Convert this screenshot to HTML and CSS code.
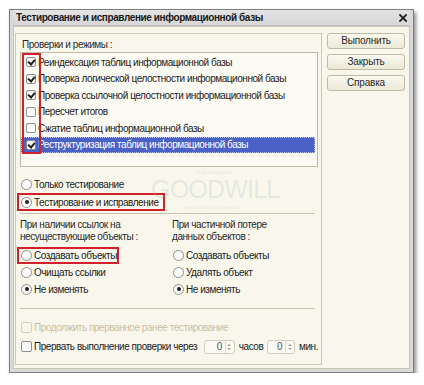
FILE: index.html
```html
<!DOCTYPE html>
<html lang="ru">
<head>
<meta charset="utf-8">
<title>Тестирование и исправление информационной базы</title>
<link rel="stylesheet" href="styles.css">
</head>
<body>
<div class="window">
  <div class="titlebar">
    <span class="title">Тестирование и исправление информационной базы</span>
    <svg class="close" width="8" height="8" viewBox="0 0 8 8"><path d="M1 1L7 7M7 1L1 7" stroke="#222" stroke-width="1.8" stroke-linecap="square"/></svg>
  </div>
  <div class="content">
    <div class="group">
      <div class="caption">Проверки и режимы :</div>
      <div class="list">
        <div class="row"><span class="cb on"></span><span>Реиндексация таблиц информационной базы</span></div>
        <div class="row"><span class="cb on"></span><span>Проверка логической целостности информационной базы</span></div>
        <div class="row"><span class="cb on"></span><span>Проверка ссылочной целостности информационной базы</span></div>
        <div class="row"><span class="cb"></span><span>Пересчет итогов</span></div>
        <div class="row"><span class="cb"></span><span>Сжатие таблиц информационной базы</span></div>
        <div class="row sel"><span class="cb on"></span><span class="seltext">Реструктуризация таблиц информационной базы</span></div>
        <div class="mark-cbs"></div>
      </div>

      <div class="modes">
        <div class="opt"><span class="rb"></span><span>Только тестирование</span></div>
        <div class="opt marked wide"><span class="rb on"></span><span>Тестирование и исправление</span></div>
      </div>
      <div class="sep"></div>

      <div class="cols">
        <div class="col">
          <div class="label">При наличии ссылок на<br>несуществующие объекты :</div>
          <div class="opt marked narrow"><span class="rb"></span><span>Создавать объекты</span></div>
          <div class="opt"><span class="rb"></span><span>Очищать ссылки</span></div>
          <div class="opt"><span class="rb on"></span><span>Не изменять</span></div>
        </div>
        <div class="col col2">
          <div class="label">При частичной потере<br>данных объектов :</div>
          <div class="opt"><span class="rb"></span><span>Создавать объекты</span></div>
          <div class="opt"><span class="rb"></span><span>Удалять объект</span></div>
          <div class="opt"><span class="rb on"></span><span>Не изменять</span></div>
        </div>
      </div>
      <div class="sep sep2"></div>

      <div class="check disabled"><span class="cb"></span><span>Продолжить прерванное ранее тестирование</span></div>
      <div class="check"><span class="cb"></span><span>Прервать выполнение проверки через</span>
        <span class="spin"><span class="val">0</span><span class="arr"><i class="up"></i><i class="down"></i></span></span>
        <span>часов</span>
        <span class="spin"><span class="val">0</span><span class="arr"><i class="up"></i><i class="down"></i></span></span>
        <span>мин.</span>
      </div>
    </div>

    <div class="buttons">
      <div class="btn">Выполнить</div>
      <div class="btn">Закрыть</div>
      <div class="btn">Справка</div>
    </div>
  </div>

  <div class="watermark">
    <div class="wm-top">блог компании</div>
    <div class="wm-main">GOODWILL</div>
    <div class="wm-bot">технологии для бизнеса</div>
  </div>
</div>
</body>
</html>
```

FILE: styles.css
```css
html, body {
  margin: 0;
  padding: 0;
  background: #ffffff;
}
body {
  font-family: "Liberation Sans", Arial, sans-serif;
  font-size: 10px;
  letter-spacing: -0.45px;
  color: #1c1c1c;
}
.window {
  position: relative;
  margin: 9px 0 0 9px;
  width: 405px;
  height: 364px;
  box-sizing: border-box;
  border: 1px solid #7e7e7e;
  background: #d9d9d9;
  padding: 0 3px 3px 3px;
  box-shadow: 2px 3px 4px rgba(0, 0, 0, 0.45);
  display: flex;
  flex-direction: column;
}
.titlebar {
  height: 15px;
  flex: none;
  display: flex;
  align-items: center;
  justify-content: space-between;
  padding: 0 3px 0 3px;
  background: linear-gradient(#e4e4e4, #d6d6d6);
  border-bottom: 1px solid #c2c2c2;
}
.title {
  font-weight: bold;
  font-size: 10px;
  color: #1a1a1a;
  letter-spacing: -0.4px;
}
.close {
  display: block;
}
.content {
  flex: 1;
  display: flex;
  background: #f9f7ec;
  border: 1px solid #c9c6b6;
  padding: 6px 4px 3px 1px;
  gap: 5px;
}
.group {
  width: 307px;
  box-sizing: border-box;
  border: 1px solid #cdc9b6;
  padding: 3px 3px 0 4px;
}
.caption {
  height: 15px;
  line-height: 15px;
  padding-left: 2px;
  color: #2a2a2a;
}
.list {
  position: relative;
  height: 115px;
  box-sizing: border-box;
  border: 1px solid #bdb9a6;
  background: #fbfaf3;
  padding-top: 1px;
  width: 298px;
}
.row {
  height: 16.5px;
  display: flex;
  align-items: center;
  padding-left: 5px;
  white-space: nowrap;
}
.row .cb {
  margin-right: 2px;
}
.row.sel {
  background: #4a62c6;
  color: #ffffff;
  margin-right: 2px;
  outline: 1px dotted #b9c2ec;
  outline-offset: -1px;
}
.cb {
  width: 10px;
  height: 10px;
  flex: none;
  box-sizing: border-box;
  border: 1px solid #8e8e8e;
  border-radius: 2px;
  background: linear-gradient(#f2f2f2, #ffffff);
  display: inline-block;
  position: relative;
}
.cb.on::after {
  content: "";
  position: absolute;
  left: 2px;
  top: 0px;
  width: 3px;
  height: 5px;
  border-right: 2px solid #1f1f1f;
  border-bottom: 2px solid #1f1f1f;
  transform: rotate(40deg);
}
.mark-cbs {
  position: absolute;
  left: 1px;
  top: 0px;
  width: 15px;
  height: 97px;
  border: 2px solid #d3212b;
}
.modes {
  margin-top: 8px;
}
.opt {
  height: 18px;
  display: flex;
  align-items: center;
  white-space: nowrap;
  box-sizing: border-box;
}
.cols .opt {
  height: 17px;
}
.rb {
  width: 11px;
  height: 11px;
  flex: none;
  box-sizing: border-box;
  border: 1px solid #8e8e8e;
  border-radius: 50%;
  background: #fdfdfb;
  margin-right: 2px;
  margin-left: 1px;
  position: relative;
}
.rb.on::after {
  content: "";
  position: absolute;
  left: 2.5px;
  top: 2.5px;
  width: 4px;
  height: 4px;
  border-radius: 50%;
  background: #222;
}
.marked {
  border: 2px solid #d3212b;
  margin-left: -3px;
  padding-left: 1px;
}
.marked.wide {
  width: 148px;
}
.marked.narrow {
  width: 102px;
}
.sep {
  height: 1px;
  background: #c8c4b0;
  margin: 2px 3px 0 0;
}
.cols {
  display: flex;
  margin-top: 5px;
}
.col {
  width: 152px;
}
.col2 {
  width: 140px;
}
.label {
  line-height: 12px;
  margin-bottom: 3.5px;
  color: #2a2a2a;
}
.sep2 {
  margin-top: 10.5px;
}
.check {
  height: 19px;
  display: flex;
  align-items: center;
  white-space: nowrap;
  gap: 0;
}
.sep2 + .check {
  margin-top: 9px;
}
.check .cb {
  width: 11px;
  height: 11px;
  margin: 0 2px 0 1px;
}
.check.disabled {
  color: #c9bfa4;
}
.check.disabled .cb {
  border-color: #d6cfbd;
  background: #f9f7ec;
}
.spin {
  display: inline-flex;
  align-items: stretch;
  height: 14px;
  width: 31px;
  box-sizing: border-box;
  border: 1px solid #d2cebd;
  border-radius: 3px;
  background: #fbfaf4;
  margin: 0 4px 0 7px;
}
.spin + span + .spin {
  margin-left: 4px;
  width: 28px;
}
.val {
  flex: 1;
  text-align: right;
  padding-right: 3px;
  line-height: 12px;
  color: #555;
}
.arr {
  width: 7px;
  border-left: 1px solid #e0dccb;
  display: flex;
  flex-direction: column;
  justify-content: center;
  align-items: center;
  gap: 2px;
  padding-right: 1px;
}
.arr i {
  display: block;
  width: 0;
  height: 0;
  border-left: 2px solid transparent;
  border-right: 2px solid transparent;
}
.arr i.up {
  border-bottom: 2px solid #9b9b9b;
}
.arr i.down {
  border-top: 2px solid #9b9b9b;
}
.buttons {
  width: 78px;
  display: flex;
  flex-direction: column;
  gap: 5px;
}
.btn {
  height: 16px;
  box-sizing: border-box;
  border: 1px solid #bfbba4;
  border-radius: 3px;
  background: linear-gradient(#fbfaf2, #ebe8d6);
  text-align: center;
  line-height: 14px;
  color: #2a2a2a;
  letter-spacing: -0.2px;
}
.watermark {
  position: absolute;
  left: 141px;
  top: 159px;
  width: 124px;
  pointer-events: none;
  color: rgba(150, 178, 192, 0.22);
  letter-spacing: 0;
}
.wm-top {
  font-size: 5px;
  text-align: right;
  padding-right: 44px;
  line-height: 6px;
}
.wm-main {
  font-size: 25px;
  line-height: 29px;
  letter-spacing: -0.8px;
}
.wm-bot {
  font-size: 5px;
  text-align: right;
  padding-right: 36px;
  line-height: 6px;
}
```
